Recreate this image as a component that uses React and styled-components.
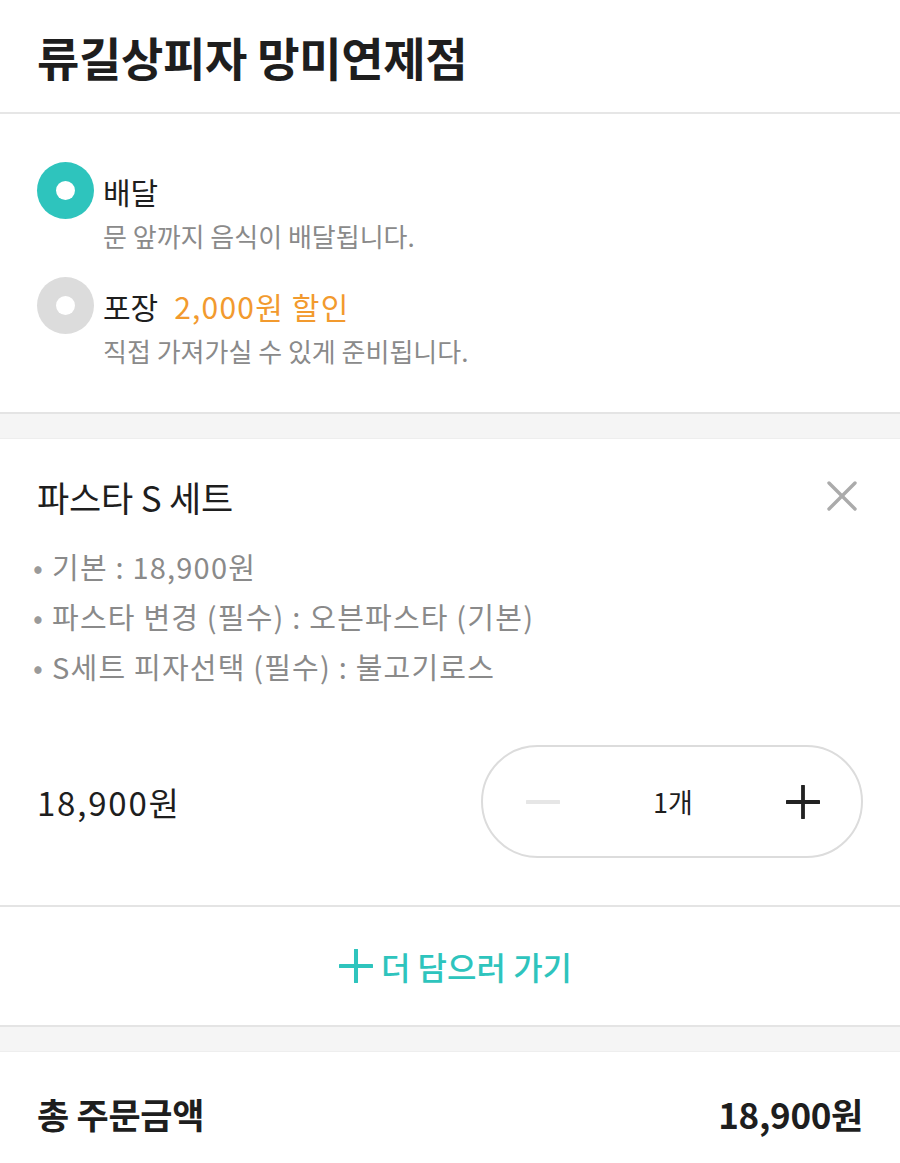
import React, { useState } from "react";
import styled, { createGlobalStyle } from "styled-components";

const GlobalStyle = createGlobalStyle`
  body {
    margin: 0;
    background: #fff;
    font-family: "Noto Sans CJK KR", "Noto Sans", sans-serif;
    color: #1e1e1e;
  }
`;

const Page = styled.div`
  width: 900px;
  min-height: 1163px;
  background: #fff;
`;

const Header = styled.header`
  height: 112px;
  display: flex;
  align-items: center;
  padding: 0 37px;
  border-bottom: 2px solid #e6e6e6;
`;

const Title = styled.h1`
  margin: 0;
  font-size: 46px;
  font-weight: 700;
  letter-spacing: -0.3px;
  color: #1e1e1e;
`;

const Section = styled.section`
  padding: ${(p) => p.$pad || "0 37px"};
  border-bottom: 2px solid #e4e4e4;
`;

const Band = styled.div`
  height: 24px;
  background: #f5f5f5;
  border-bottom: 1px solid #eeeeee;
`;

const Options = styled.div`
  display: flex;
  flex-direction: column;
  gap: 24px;
`;

const Option = styled.div`
  display: grid;
  grid-template-columns: 57px 1fr;
  column-gap: 11px;
  cursor: pointer;
`;

const Radio = styled.span`
  width: 57px;
  height: 57px;
  border-radius: 50%;
  background: ${(p) => (p.$on ? "#2ec4bd" : "#dcdcdc")};
  display: flex;
  align-items: center;
  justify-content: center;
  &::after {
    content: "";
    width: 19px;
    height: 19px;
    border-radius: 50%;
    background: #fff;
  }
`;

const OptionLabel = styled.div`
  display: flex;
  align-items: center;
  gap: 16px;
  font-size: 30px;
  color: #1e1e1e;
  height: 57px;
  margin-left: -2px;
`;

const Discount = styled.span`
  color: #f29a2e;
  letter-spacing: 1.2px;
`;

const OptionDesc = styled.div`
  grid-column: 2;
  font-size: 26px;
  line-height: 34px;
  color: #8a8a8a;
  margin-left: -2px;
`;

const ItemHead = styled.div`
  display: flex;
  align-items: center;
  justify-content: space-between;
  height: 50px;
`;

const ItemName = styled.div`
  font-size: 35px;
  color: #1e1e1e;
  letter-spacing: -0.2px;
`;

const CloseBtn = styled.button`
  border: none;
  background: none;
  padding: 0;
  margin-right: 5px;
  width: 32px;
  height: 32px;
  display: flex;
  cursor: pointer;
`;

const OptionList = styled.ul`
  list-style: none;
  margin: 20px 0 0 -4px;
  padding: 0;
`;

const OptionItem = styled.li`
  font-size: 29px;
  line-height: 50px;
  color: #8a8a8a;
  letter-spacing: 1.2px;
  &::before {
    content: "•";
    margin-right: 8px;
    color: #9a9a9a;
  }
`;

const PriceRow = styled.div`
  margin-top: 54px;
  display: flex;
  align-items: center;
  justify-content: space-between;
`;

const Price = styled.div`
  font-size: 33px;
  color: #1e1e1e;
  letter-spacing: 1.8px;
`;

const Stepper = styled.div`
  width: 382px;
  height: 113px;
  box-sizing: border-box;
  border: 2px solid #dcdcdc;
  border-radius: 57px;
  display: flex;
  align-items: center;
  justify-content: space-between;
  padding: 0 40px 0 42px;
`;

const StepBtn = styled.button`
  border: none;
  background: none;
  padding: 0;
  width: 36px;
  height: 36px;
  display: flex;
  align-items: center;
  justify-content: center;
  cursor: pointer;
`;

const Count = styled.span`
  font-size: 27px;
  color: #1e1e1e;
`;

const AddMore = styled.button`
  width: 100%;
  height: 118px;
  border: none;
  background: #fff;
  display: flex;
  align-items: center;
  justify-content: center;
  gap: 8px;
  padding: 0 0 0 11px;
  font-family: inherit;
  font-size: 32px;
  font-weight: 500;
  color: #2ec4bd;
  cursor: pointer;
`;

const TotalRow = styled.div`
  display: flex;
  align-items: center;
  justify-content: space-between;
  padding: 36px 37px;
  font-size: 35px;
  font-weight: 700;
  color: #1e1e1e;
  letter-spacing: -0.3px;
`;

const Icon = ({ size, color, stroke, children }) => (
  <svg width={size} height={size} viewBox="0 0 32 32" fill="none" stroke={color} strokeWidth={stroke} strokeLinecap="round">
    {children}
  </svg>
);

export default function App() {
  const [mode, setMode] = useState("delivery");
  const [qty, setQty] = useState(1);

  return (
    <Page>
      <GlobalStyle />
      <Header>
        <Title>류길상피자 망미연제점</Title>
      </Header>

      <Section $pad="48px 37px 44px">
        <Options>
          <Option onClick={() => setMode("delivery")}>
            <Radio $on={mode === "delivery"} />
            <OptionLabel>배달</OptionLabel>
            <OptionDesc>문 앞까지 음식이 배달됩니다.</OptionDesc>
          </Option>
          <Option onClick={() => setMode("pickup")}>
            <Radio $on={mode === "pickup"} />
            <OptionLabel>
              포장 <Discount>2,000원 할인</Discount>
            </OptionLabel>
            <OptionDesc>직접 가져가실 수 있게 준비됩니다.</OptionDesc>
          </Option>
        </Options>
      </Section>
      <Band />

      <Section $pad="32px 37px 47px">
        <ItemHead>
          <ItemName>파스타 S 세트</ItemName>
          <CloseBtn aria-label="삭제">
            <Icon size={32} color="#ababab" stroke={3.4}>
              <path d="M3 3 L29 29 M29 3 L3 29" />
            </Icon>
          </CloseBtn>
        </ItemHead>
        <OptionList>
          <OptionItem>기본 : 18,900원</OptionItem>
          <OptionItem>파스타 변경 (필수) : 오븐파스타 (기본)</OptionItem>
          <OptionItem>S세트 피자선택 (필수) : 불고기로스</OptionItem>
        </OptionList>
        <PriceRow>
          <Price>{(18900 * qty).toLocaleString()}원</Price>
          <Stepper>
            <StepBtn aria-label="빼기" onClick={() => setQty(Math.max(1, qty - 1))}>
              <Icon size={34} color="#e6e6e6" stroke={3.6}>
                <path d="M1 16 H31" />
              </Icon>
            </StepBtn>
            <Count>{qty}개</Count>
            <StepBtn aria-label="더하기" onClick={() => setQty(qty + 1)}>
              <Icon size={34} color="#222" stroke={3.6}>
                <path d="M1 16 H31 M16 1 V31" />
              </Icon>
            </StepBtn>
          </Stepper>
        </PriceRow>
      </Section>

      <Section $pad="0">
        <AddMore>
          <Icon size={34} color="#2ec4bd" stroke={3.8}>
            <path d="M1 16 H31 M16 1 V31" />
          </Icon>
          더 담으러 가기
        </AddMore>
      </Section>
      <Band />

      <TotalRow>
        <span>총 주문금액</span>
        <span>{(18900 * qty).toLocaleString()}원</span>
      </TotalRow>
    </Page>
  );
}
